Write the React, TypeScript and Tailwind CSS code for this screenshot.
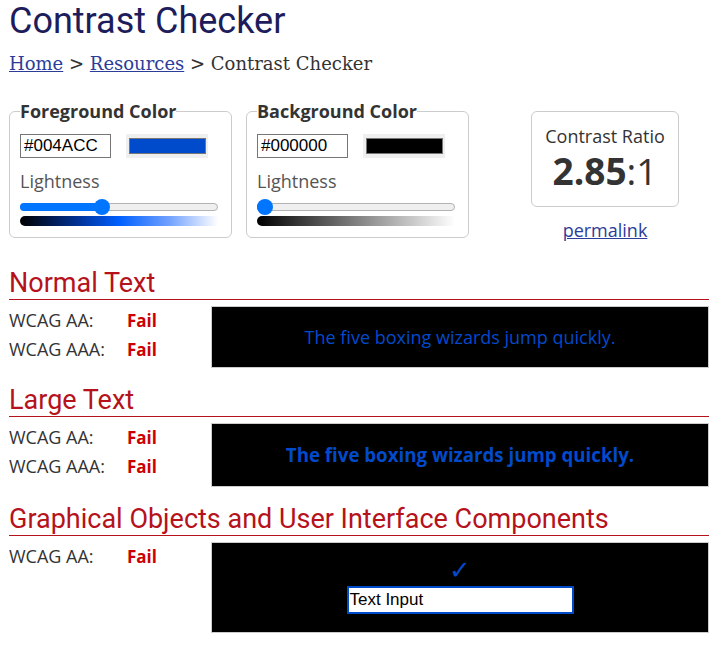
import type { ReactNode } from "react";

type ColorBoxProps = {
  legend: string;
  hex: string;
  swatch: string;
  thumb: number;
  gradient: string;
};

// Slider drawn by hand so that it looks like Chrome's default range input.
function Slider({ thumb }: { thumb: number }) {
  return (
    <div className="relative h-4 w-[198px]">
      <div className="absolute left-0 right-0 top-[4px] h-[8px] rounded-full border border-[#b2b2b2] bg-[#efefef]" />
      <div
        className="absolute left-0 top-[4px] h-[8px] rounded-l-full bg-[#0075ff]"
        style={{ width: thumb }}
      />
      <div
        className="absolute top-0 h-4 w-4 rounded-full bg-[#0075ff]"
        style={{ left: thumb - 8 }}
      />
    </div>
  );
}

function ColorBox({ legend, hex, swatch, thumb, gradient }: ColorBoxProps) {
  return (
    <fieldset className="w-[223px] rounded-md border border-[#ccc] px-[10px] pb-[11px]">
      <legend className="px-0 text-[18px] font-bold leading-5 text-[#333]">
        {legend}
      </legend>
      <div className="mt-[13px] flex items-center gap-[15px]">
        <div className="flex h-[24px] w-[91px] items-center border border-[#767676] px-[3px] font-['Liberation_Sans',sans-serif] text-[17px] text-black">
          {hex}
        </div>
        <div className="flex h-[24px] w-[82px] items-center justify-center bg-[#efefef] p-[2px]">
          <div
            className="h-[16px] w-[77px] border border-[#767676]"
            style={{ backgroundColor: swatch }}
          />
        </div>
      </div>
      <div className="mt-[11px] text-[18px] leading-6 text-[#555]">Lightness</div>
      <div className="mt-[6px]">
        <Slider thumb={thumb} />
      </div>
      <div
        className="mt-[1px] h-[10px] w-[198px] rounded-l-[5px]"
        style={{ background: gradient }}
      />
    </fieldset>
  );
}

function Result({ label }: { label: string }) {
  return (
    <div className="flex h-[29px] items-center">
      <span className="w-[118px] text-[18px] text-[#333]">{label}</span>
      <span className="text-[17px] font-bold text-[#c00]">Fail</span>
    </div>
  );
}

function Section({
  title,
  children,
  rows,
  boxClass,
}: {
  title: string;
  children: ReactNode;
  rows: string[];
  boxClass: string;
}) {
  return (
    <section className="mt-[17px] first:mt-0">
      <h2 className="border-b border-[#b5121b] font-['Roboto',sans-serif] text-[27px] leading-[31px] text-[#b5121b]">
        {title}
      </h2>
      <div className="mt-[6px] flex">
        <div className="w-[202px]">
          {rows.map((r) => (
            <Result key={r} label={r} />
          ))}
        </div>
        <div
          className={
            "flex flex-1 border border-[#ccc] bg-black " + boxClass
          }
        >
          {children}
        </div>
      </div>
    </section>
  );
}

export default function App() {
  return (
    <div className="min-h-[645px] bg-white pl-[9px] pr-[4px] font-['Open_Sans',sans-serif] text-[#333]">
      <h1 className="pt-[1px] font-['Roboto',sans-serif] text-[36px] leading-[40px] text-[#1d1d5c]">
        Contrast Checker
      </h1>
      <nav className="mt-[11px] font-['DejaVu_Serif',serif] text-[18px] leading-6 text-[#333]">
        <a href="#" className="text-[#2b3d99] underline">
          Home
        </a>{" "}
        &gt;{" "}
        <a href="#" className="text-[#2b3d99] underline">
          Resources
        </a>{" "}
        &gt; Contrast Checker
      </nav>

      <div className="mt-[25px] flex items-start">
        <ColorBox
          legend="Foreground Color"
          hex="#004ACC"
          swatch="#004ACC"
          thumb={82}
          gradient="linear-gradient(to right, #000 0%, #003399 30%, #0060ff 50%, #6fa0ff 75%, #fff 100%)"
        />
        <div className="ml-[14px]">
          <ColorBox
            legend="Background Color"
            hex="#000000"
            swatch="#000000"
            thumb={8}
            gradient="linear-gradient(to right, #000 0%, #fff 100%)"
          />
        </div>
        <div className="ml-[62px] flex flex-col items-center">
          <div className="mt-[10px] flex h-[96px] w-[148px] flex-col items-center rounded-md border border-[#ccc] pt-[12px]">
            <div className="text-[18px] leading-6 text-[#333]">Contrast Ratio</div>
            <div className="mt-[1px] text-[37px] leading-[44px] text-[#333]">
              <span className="font-bold">2.85</span>:1
            </div>
          </div>
          <a
            href="#"
            className="mt-[11px] text-[18px] leading-6 text-[#2b3d99] underline"
          >
            permalink
          </a>
        </div>
      </div>

      <div className="mt-[26px]">
        <Section
          title="Normal Text"
          rows={["WCAG AA:", "WCAG AAA:"]}
          boxClass="h-[62px] items-center justify-center"
        >
          <span className="text-[18px] text-[#004ACC]">
            The five boxing wizards jump quickly.
          </span>
        </Section>
        <Section
          title="Large Text"
          rows={["WCAG AA:", "WCAG AAA:"]}
          boxClass="h-[64px] items-center justify-center"
        >
          <span className="text-[18.7px] font-bold text-[#004ACC]">
            The five boxing wizards jump quickly.
          </span>
        </Section>
        <Section
          title="Graphical Objects and User Interface Components"
          rows={["WCAG AA:"]}
          boxClass="h-[91px] flex-col items-center pt-[14px]"
        >
          <span className="font-['DejaVu_Sans',sans-serif] text-[26px] leading-[26px] text-[#004ACC]">
            ✓
          </span>
          <div className="mt-[3px] flex h-[28px] w-[227px] items-center border-2 border-[#004ACC] bg-white px-[1px] font-['Liberation_Sans',sans-serif] text-[17px] text-black">
            Text Input
          </div>
        </Section>
      </div>
    </div>
  );
}
